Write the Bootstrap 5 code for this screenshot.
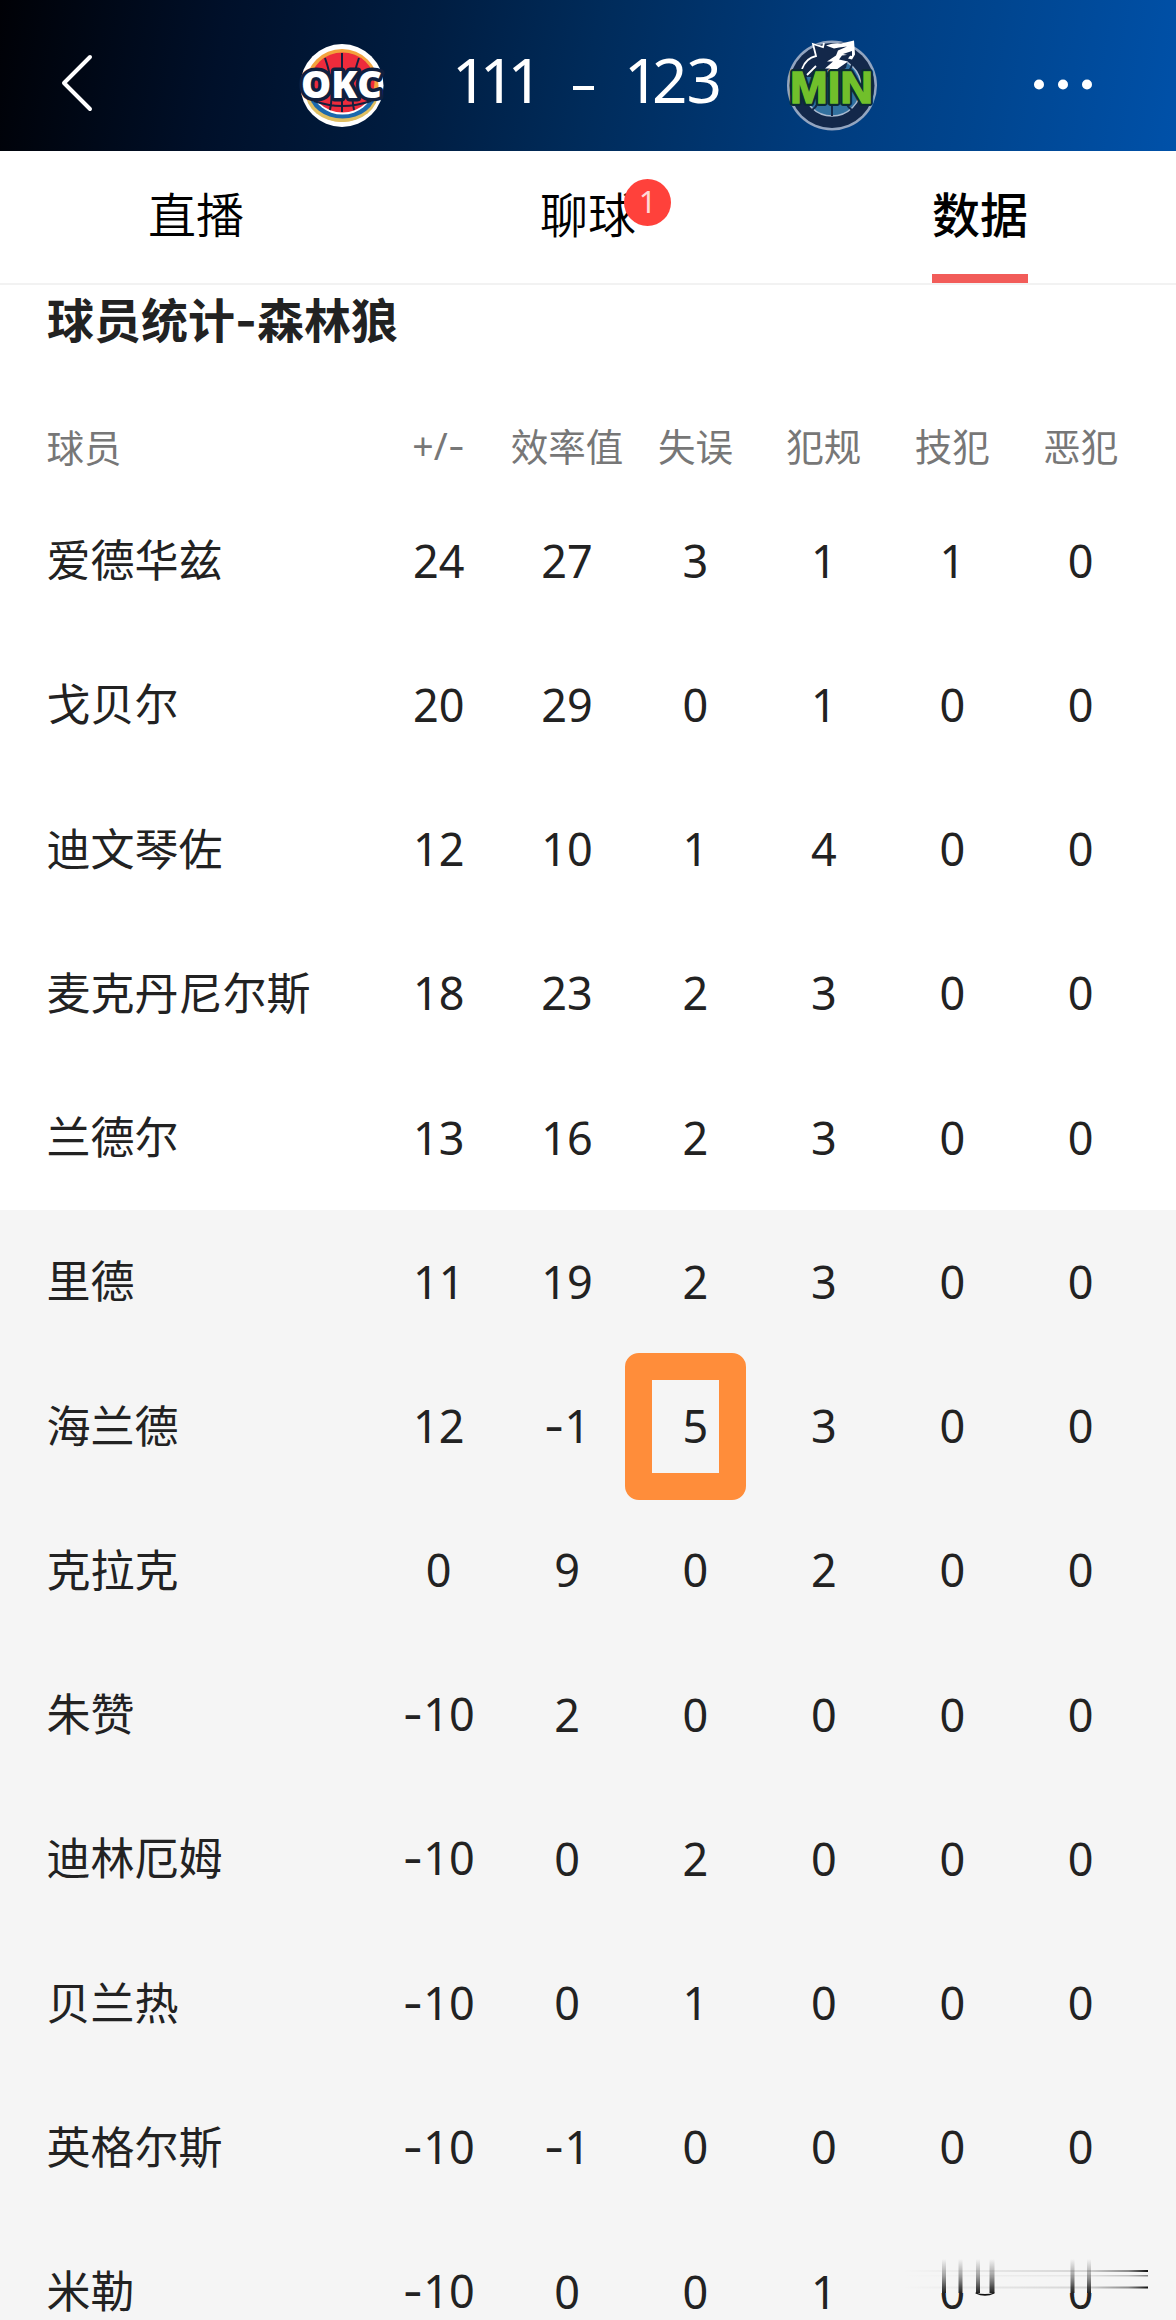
<!DOCTYPE html>
<html lang="zh-CN">
<head>
    <meta charset="UTF-8">
    <meta name="viewport" content="width=device-width, initial-scale=1.0">
    <title>球员统计-森林狼</title>
    <link href="https://cdn.jsdelivr.net/npm/bootstrap@5.3.3/dist/css/bootstrap.min.css" rel="stylesheet">
    <style>
        :root {
            --ink: #222222;
            --muted-ink: #777777;
            --accent: #f25c59;
            --badge-red: #ff413b;
            --bench-bg: #f5f5f5;
            --marker: #ff8d3a;
            --row-height: 144.25px;
        }

        body {
            height: 2320px;
            margin: 0;
            overflow: hidden;
            background: #fff;
            color: var(--ink);
            font-family: "Noto Sans", "Noto Sans CJK SC", sans-serif;
        }

        /* Score bar */
        .score-bar {
            height: 151px;
            background: linear-gradient(100deg, #000106 0%, #00102a 19%, #001d41 36%, #002b5a 50%, #003c7e 70%, #00458f 83%, #0051a9 100%);
            color: #fff;
        }

        .score-bar svg {
            display: block;
            flex: none;
            overflow: visible;
        }

        .back-icon { margin-left: 57px; }
        .okc-logo { margin-left: 202px; }
        .min-logo { margin-left: 62px; }
        .more-icon { margin-left: 151px; }

        .score {
            font-size: 62px;
            line-height: 84px;
            white-space: nowrap;
            padding-top: 7px;
        }

        .score-away {
            width: 92px;
            margin-left: 67px;
            letter-spacing: -7.7px;
        }

        .score-dash {
            width: 21px;
            height: 4px;
            margin: 24px 30px 0 29px;
            background: #fff;
        }

        .score-home {
            width: 100px;
            letter-spacing: -1px;
        }

        .score-home span { letter-spacing: -7.5px; }

        /* Tabs */
        .tab-bar {
            height: 134px;
            border-bottom: 2px solid #f2f2f2;
        }

        .tab-link {
            position: relative;
            height: 132px;
            padding-bottom: 10px;
            font-family: "Noto Sans CJK SC", sans-serif;
            font-size: 48px;
            line-height: 1;
            font-weight: 350;
            color: #000;
            text-decoration: none;
        }

        .tab-link.active { font-weight: 500; }

        .tab-link.active::after {
            content: "";
            position: absolute;
            bottom: 0;
            left: calc(50% - 48px);
            width: 96px;
            height: 9px;
            background: var(--accent);
        }

        .chat-badge {
            position: absolute;
            top: 28px;
            left: 232px;
            width: 47px;
            height: 47px;
            padding-bottom: 2px;
            background: var(--badge-red);
            color: #ffd9d7;
            font-family: "Noto Sans", sans-serif;
            font-size: 31px;
            font-weight: 400;
        }

        /* Stats */
        .stats-title {
            height: 67px;
            padding-left: 47px;
            font-family: "Noto Sans CJK SC", sans-serif;
            font-size: 47px;
            font-weight: 700;
            line-height: 65px;
        }

        .stats-head {
            height: 83px;
            margin-top: 54px;
            padding-bottom: 2px;
            font-size: 37.5px;
            color: var(--muted-ink);
        }

        .stats-row {
            height: var(--row-height);
            font-size: 45px;
        }

        .stats-head, .stats-row {
            line-height: 1;
            padding-left: 46.5px;
            white-space: nowrap;
        }

        .player-name {
            width: 328px;
            padding-bottom: 6px;
            font-family: "Noto Sans CJK SC", sans-serif;
        }

        .stats-head .player-name { padding-bottom: 2px; }
        .stats-row .player-name { font-size: 44px; }

        .stat-cell {
            position: relative;
            width: 128.4px;
            text-align: center;
        }

        .stats-row .stat-cell { padding-bottom: 2px; }

        .minus-sign { font-family: Inter, sans-serif; }

        .bench { background: var(--bench-bg); }

        .turnover-marker {
            position: absolute;
            top: calc(50% - 74px);
            left: -6.5px;
            width: 121px;
            height: 147px;
            border: 27px solid var(--marker);
            border-radius: 14px;
        }

        .corner-smudge {
            position: absolute;
            left: 890px;
            top: 2255px;
        }
    </style>
</head>
<body>
    <header class="score-bar d-flex align-items-center">
        <svg class="back-icon" width="40" height="64" viewBox="0 0 40 64" fill="none" stroke="#fff" stroke-width="4" stroke-linecap="round" stroke-linejoin="round">
            <path d="M33 13 7 39 33 65"/>
        </svg>
        <svg class="okc-logo" width="86" height="100" viewBox="0 0 86 100">
            <circle cx="43" cy="59.500" r="41.5" fill="#fff"/>
            <circle cx="43" cy="59.500" r="36.500" fill="#f3a23d"/>
            <path d="M6.500 66a36.500 30 0 0 0 73 0z" fill="#dfbf62"/>
            <path d="M10 66a33.500 26.500 0 0 0 67 0z" fill="#1b68ad"/>
            <path d="M14 64a29.500 24.500 0 0 0 59 0z" fill="#fff"/>
            <ellipse cx="43.500" cy="56.500" rx="32" ry="30" fill="#ee2b3c"/>
            <path d="M43 27v59M26 32q10 28 5 52M60 32q-10 28-5 52M15 75q28 10 57 0" fill="none" stroke="#15203f" stroke-width="2"/>
            <text x="2" y="72" textLength="81" lengthAdjust="spacingAndGlyphs" font-family="Open Sans, sans-serif" font-weight="800" font-size="37" fill="#fff" stroke="#10203f" stroke-width="7" stroke-linejoin="round" paint-order="stroke">OKC</text>
        </svg>
        <div class="score score-away">111</div>
        <div class="score-dash"></div>
        <div class="score score-home"><span>1</span>23</div>
        <svg class="min-logo" width="92" height="100" viewBox="0 0 92 100">
            <circle cx="46" cy="59.500" r="45" fill="#93a5c0"/>
            <circle cx="46" cy="59.500" r="42.500" fill="#13284a"/>
            <circle cx="46" cy="61" r="29" fill="#32719f" stroke="#a9bad0" stroke-width="1.500"/>
            <path d="M46 66v24M32 70q1 10-6 14M60 70q-1 10 6 14M59 50q8-8 8-18" fill="none" stroke="#13284a" stroke-width="2"/>
            <path d="M17 51 20 37 30 30 27 17 38 20 52 17 66 16 60 42 46 51z" fill="#13284a"/>
            <path d="M16 43q4-11 14-13l-3-12 10 3 1-4M21 49l9-9" fill="none" stroke="#fff" stroke-width="1.800"/>
            <path d="M40 19.500q8-3 15-2l13-3 1 14-3 5-4-1 3-4-9 1-3 4 9 2-10 7-4 4-9 0 5-4-5 0 8-7-6 0 9-6 2-5 9-4-8 1-5 1z" fill="#fff"/>
            <path d="M57 28l9-3v5z" fill="#13284a"/>
            <text x="4" y="76.500" textLength="83" lengthAdjust="spacingAndGlyphs" font-family="Liberation Sans, sans-serif" font-weight="700" font-size="45" fill="#71bf2b" stroke="#0b2b35" stroke-width="6" stroke-linejoin="round" paint-order="stroke">MIN</text>
            <text x="4" y="76.500" textLength="83" lengthAdjust="spacingAndGlyphs" font-family="Liberation Sans, sans-serif" font-weight="700" font-size="45" fill="#71bf2b" stroke="#71bf2b" stroke-width="1.500" aria-hidden="true">MIN</text>
        </svg>
        <svg class="more-icon" width="64" height="30" viewBox="0 0 64 30" fill="#fff">
            <circle cx="10" cy="23.500" r="5"/>
            <circle cx="34" cy="23.500" r="5"/>
            <circle cx="58" cy="23.500" r="5"/>
        </svg>
    </header>

    <nav class="tab-bar row g-0">
        <a href="#" class="tab-link col-4 d-flex align-items-center justify-content-center">直播</a>
        <a href="#" class="tab-link col-4 d-flex align-items-center justify-content-center">聊球<span class="chat-badge rounded-circle d-flex align-items-center justify-content-center">1</span></a>
        <a href="#" class="tab-link active col-4 d-flex align-items-center justify-content-center">数据</a>
    </nav>

    <main>
        <h1 class="stats-title mb-0">球员统计<span class="minus-sign">-</span>森林狼</h1>
        <div class="stats-head d-flex align-items-center">
            <div class="player-name">球员</div>
            <div class="stat-cell">+/<span class="minus-sign">-</span></div>
            <div class="stat-cell">效率值</div>
            <div class="stat-cell">失误</div>
            <div class="stat-cell">犯规</div>
            <div class="stat-cell">技犯</div>
            <div class="stat-cell">恶犯</div>
        </div>
        <div id="starters"></div>
        <div id="bench" class="bench"></div>
    </main>

    <!-- Streaked mark in the lower right corner -->
    <svg class="corner-smudge" width="270" height="65" viewBox="0 0 270 65">
        <defs>
            <linearGradient id="fadeDown" x1="0" y1="0" x2="0" y2="1">
                <stop offset="0" stop-color="#222" stop-opacity="0"/>
                <stop offset=".5" stop-color="#222" stop-opacity=".4"/>
                <stop offset="1" stop-color="#222"/>
            </linearGradient>
            <linearGradient id="fadeRight" x1="0" y1="0" x2="1" y2="0">
                <stop offset="0" stop-color="#222" stop-opacity="0"/>
                <stop offset=".75" stop-color="#222" stop-opacity=".15"/>
                <stop offset=".92" stop-color="#222" stop-opacity=".5"/>
                <stop offset="1" stop-color="#111"/>
            </linearGradient>
        </defs>
        <rect x="10" y="3" width="250" height="35" fill="#f5f5f5"/>
        <g fill="url(#fadeDown)">
            <rect x="52" y="4" width="4" height="34"/>
            <rect x="68.500" y="4" width="4" height="34"/>
            <rect x="86" y="4" width="4" height="34"/>
            <rect x="99.500" y="4" width="5" height="34"/>
            <rect x="180.500" y="4" width="4" height="34"/>
            <rect x="197" y="4" width="4" height="34"/>
        </g>
        <path d="M85.500 37.500q9.500 3 19 0v1q-9.500 4.500-19 0z" fill="#111"/>
        <g fill="url(#fadeRight)">
            <rect x="12" y="15" width="246" height="2"/>
            <rect x="12" y="20" width="246" height="1.500" opacity=".5"/>
            <rect x="12" y="31.500" width="246" height="2"/>
        </g>
    </svg>

    <script src="https://cdn.jsdelivr.net/npm/bootstrap@5.3.3/dist/js/bootstrap.bundle.min.js"></script>
    <script>
        // name, +/-, efficiency, turnovers, fouls, technical fouls, flagrant fouls
        const starters = [
            ['爱德华兹', 24, 27, 3, 1, 1, 0],
            ['戈贝尔', 20, 29, 0, 1, 0, 0],
            ['迪文琴佐', 12, 10, 1, 4, 0, 0],
            ['麦克丹尼尔斯', 18, 23, 2, 3, 0, 0],
            ['兰德尔', 13, 16, 2, 3, 0, 0]
        ];
        const bench = [
            ['里德', 11, 19, 2, 3, 0, 0],
            ['海兰德', 12, -1, 5, 3, 0, 0],
            ['克拉克', 0, 9, 0, 2, 0, 0],
            ['朱赞', -10, 2, 0, 0, 0, 0],
            ['迪林厄姆', -10, 0, 2, 0, 0, 0],
            ['贝兰热', -10, 0, 1, 0, 0, 0],
            ['英格尔斯', -10, -1, 0, 0, 0, 0],
            ['米勒', -10, 0, 0, 1, 0, 0]
        ];

        function renderRows(id, players) {
            document.getElementById(id).innerHTML = players.map(function([name, ...stats]) {
                const cells = stats.map(function(value) {
                    const text = String(value).replace('-', '<span class="minus-sign">-</span>');
                    return '<div class="stat-cell">' + text + '</div>';
                }).join('');
                return '<div class="stats-row d-flex align-items-center"><div class="player-name">' + name + '</div>' + cells + '</div>';
            }).join('');
        }

        renderRows('starters', starters);
        renderRows('bench', bench);

        // Highlight the team-high turnover count
        const marked = document.querySelectorAll('#bench .stats-row')[1].children[3];
        marked.insertAdjacentHTML('beforeend', '<span class="turnover-marker"></span>');
    </script>
</body>
</html>
